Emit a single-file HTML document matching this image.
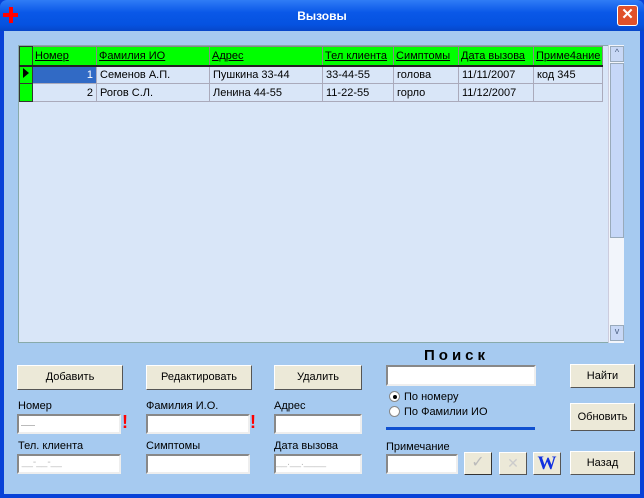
<!DOCTYPE html>
<html><head><meta charset="utf-8"><style>
*{box-sizing:border-box;margin:0;padding:0}
body{width:644px;height:498px;overflow:hidden;font-family:"Liberation Sans",sans-serif;font-size:11px;background:#0842d8;position:relative}
.title{position:absolute;left:0;top:0;width:644px;height:31px;background:linear-gradient(#2f7cf6,#0a58e8 40%,#0552e0 80%,#0746c8);border-radius:7px 7px 0 0}
.title .t{position:absolute;left:0;width:644px;top:9px;text-align:center;color:#fff;font-weight:bold;font-size:12px}
.close{position:absolute;left:617px;top:5px;width:21px;height:21px;background:#e0502a;border:1px solid #fff;border-radius:3px;color:#fff;font-size:15px;text-align:center;line-height:18px;font-weight:bold}
.body{position:absolute;left:4px;top:31px;width:636px;height:463px;background:#a6caf0}
.a{position:absolute}
.grid{position:absolute;left:18px;top:45px;width:606px;height:298px;background:#d9e6f8;border:1px solid #8aa;border-right:none}
table{border-collapse:collapse;position:absolute;left:0;top:0}
td{border:1px solid #aab;height:18px;padding:0 3px;white-space:nowrap;font-size:11px;overflow:hidden}
th{background:#00ff00;border:1px solid #888;border-bottom:2px solid #222;height:19px;font-weight:normal;text-align:left;padding:0 2px;font-size:11px;text-decoration:underline;color:#000}
.ind{background:#00ff00;border:1px solid #333;padding:0}
.sb{position:absolute;left:608px;top:45px;width:16px;height:298px;background:#f2f5fb;border-left:1px solid #ccd}
.btn{position:absolute;background:#ece9d8;border:1px solid;border-color:#fff #555 #555 #fff;text-align:center;font-size:11px}
.inp{position:absolute;background:#fff;border:2px solid;border-color:#888 #eee #eee #888;height:20px}
.lbl{position:absolute;font-size:11px}
.ex{position:absolute;color:#f00;font-weight:bold;font-size:18px}
</style></head><body>
<div class="title"><div class="t">Вызовы</div>
<div class="a" style="left:3px;top:13px;width:15px;height:4px;background:#f00"></div>
<div class="a" style="left:9px;top:7px;width:4px;height:16px;background:#f00"></div>
<div class="close">✕</div></div>
<div class="body"></div>
<div class="grid">
<table>
<tr><th class="ind" style="width:13px;border-bottom:2px solid #222"></th><th style="width:64px">Номер</th><th style="width:113px">Фамилия ИО</th><th style="width:113px">Адрес</th><th style="width:71px">Тел клиента</th><th style="width:65px">Симптомы</th><th style="width:75px">Дата вызова</th><th style="width:68px">Приме4ание</th></tr>
<tr><td class="ind"><span style="display:inline-block;border-left:6px solid #000;border-top:5px solid transparent;border-bottom:5px solid transparent;margin-left:3px"></span></td><td style="background:#316ac5;color:#fff;text-align:right">1</td><td>Семенов А.П.</td><td>Пушкина 33-44</td><td>33-44-55</td><td>голова</td><td>11/11/2007</td><td>код 345</td></tr>
<tr><td class="ind"></td><td style="text-align:right">2</td><td>Рогов С.Л.</td><td>Ленина 44-55</td><td>11-22-55</td><td>горло</td><td>11/12/2007</td><td></td></tr>
</table></div>
<div class="sb">
<div class="a" style="left:1px;top:1px;width:14px;height:16px;background:#c8d8f6;border:1px solid #9ab;font-size:9px;text-align:center;color:#4d6185">^</div>
<div class="a" style="left:1px;top:18px;width:14px;height:175px;background:#c6d7f8;border:1px solid #9ab"></div>
<div class="a" style="left:1px;top:280px;width:14px;height:16px;background:#c8d8f6;border:1px solid #9ab;font-size:9px;text-align:center;color:#4d6185">v</div>
</div>
<div class="btn" style="left:17px;top:365px;width:106px;height:25px;line-height:23px">Добавить</div>
<div class="btn" style="left:146px;top:365px;width:106px;height:25px;line-height:23px">Редактировать</div>
<div class="btn" style="left:274px;top:365px;width:88px;height:25px;line-height:23px">Удалить</div>
<div class="lbl" style="left:424px;top:347px;font-size:15px;font-weight:bold;letter-spacing:4px">Поиск</div>
<div class="inp" style="left:386px;top:365px;width:150px;height:21px"></div>
<div class="btn" style="left:570px;top:364px;width:65px;height:24px;line-height:22px">Найти</div>
<div class="a" style="left:389px;top:391px;width:11px;height:11px;border-radius:50%;background:#fff;border:1px solid #888"><div class="a" style="left:3px;top:3px;width:4px;height:4px;border-radius:50%;background:#000"></div></div>
<div class="lbl" style="left:404px;top:391px">По номеру</div>
<div class="a" style="left:389px;top:406px;width:11px;height:11px;border-radius:50%;background:#fff;border:1px solid #888"></div>
<div class="lbl" style="left:404px;top:406px">По Фамилии ИО</div>
<div class="a" style="left:386px;top:427px;width:149px;height:3px;background:#1050d0"></div>
<div class="btn" style="left:570px;top:403px;width:65px;height:28px;line-height:26px">Обновить</div>
<div class="lbl" style="left:18px;top:400px">Номер</div>
<div class="inp" style="left:17px;top:414px;width:104px"><span style="position:absolute;left:2px;top:9px;width:14px;height:1px;background:#bbb"></span></div>
<div class="ex" style="left:122px;top:412px">!</div>
<div class="lbl" style="left:146px;top:400px">Фамилия И.О.</div>
<div class="inp" style="left:146px;top:414px;width:104px"></div>
<div class="ex" style="left:250px;top:412px">!</div>
<div class="lbl" style="left:274px;top:400px">Адрес</div>
<div class="inp" style="left:274px;top:414px;width:88px"></div>
<div class="lbl" style="left:18px;top:440px">Тел. клиента</div>
<div class="inp" style="left:17px;top:454px;width:104px;color:#bbb;font-size:10px;line-height:14px">&nbsp;__-__-__</div>
<div class="lbl" style="left:146px;top:440px">Симптомы</div>
<div class="inp" style="left:146px;top:454px;width:104px"></div>
<div class="lbl" style="left:274px;top:440px">Дата вызова</div>
<div class="inp" style="left:274px;top:454px;width:88px;color:#bbb;font-size:10px;line-height:14px">__.__.____</div>
<div class="lbl" style="left:386px;top:441px">Примечание</div>
<div class="inp" style="left:386px;top:454px;width:72px"></div>
<div class="btn" style="left:464px;top:452px;width:28px;height:23px;color:#bbb;font-size:16px;line-height:20px;border-color:#fff #333 #333 #fff">✓</div>
<div class="btn" style="left:499px;top:452px;width:28px;height:23px;color:#ccc;font-size:14px;line-height:21px">✕</div>
<div class="btn" style="left:533px;top:452px;width:28px;height:23px;color:#1030e0;font-family:'Liberation Serif',serif;font-weight:bold;font-size:19px;line-height:21px">W</div>
<div class="btn" style="left:570px;top:451px;width:65px;height:24px;line-height:22px">Назад</div>
</body></html>
